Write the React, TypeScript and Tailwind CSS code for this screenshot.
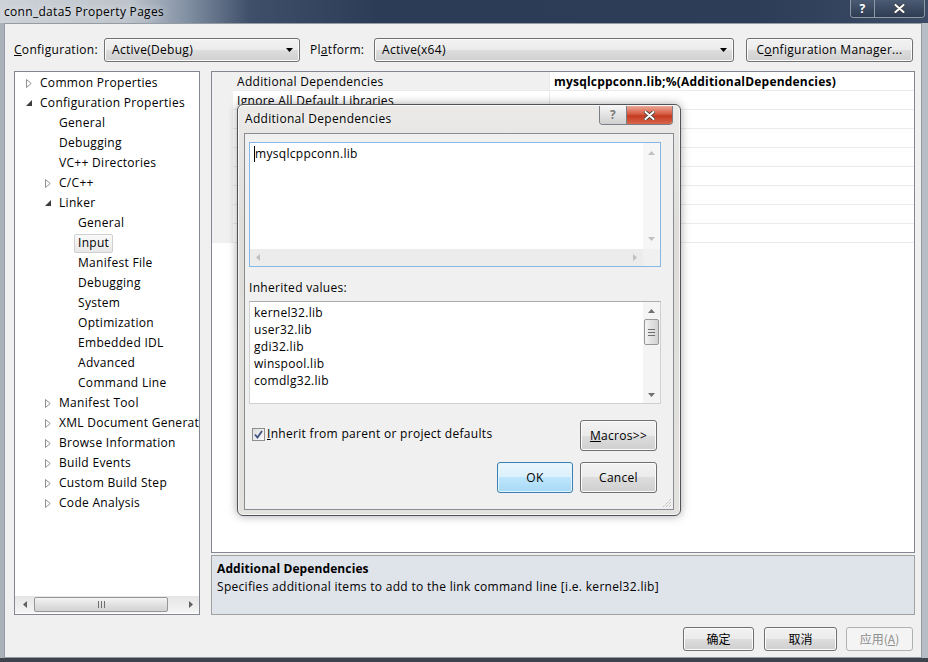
import React from "react"

type Node = { label: string; level: 0 | 1 | 2; arrow?: "open" | "closed"; selected?: boolean }

const tree: Node[] = [
  { label: "Common Properties", level: 0, arrow: "closed" },
  { label: "Configuration Properties", level: 0, arrow: "open" },
  { label: "General", level: 1 },
  { label: "Debugging", level: 1 },
  { label: "VC++ Directories", level: 1 },
  { label: "C/C++", level: 1, arrow: "closed" },
  { label: "Linker", level: 1, arrow: "open" },
  { label: "General", level: 2 },
  { label: "Input", level: 2, selected: true },
  { label: "Manifest File", level: 2 },
  { label: "Debugging", level: 2 },
  { label: "System", level: 2 },
  { label: "Optimization", level: 2 },
  { label: "Embedded IDL", level: 2 },
  { label: "Advanced", level: 2 },
  { label: "Command Line", level: 2 },
  { label: "Manifest Tool", level: 1, arrow: "closed" },
  { label: "XML Document Generator", level: 1, arrow: "closed" },
  { label: "Browse Information", level: 1, arrow: "closed" },
  { label: "Build Events", level: 1, arrow: "closed" },
  { label: "Custom Build Step", level: 1, arrow: "closed" },
  { label: "Code Analysis", level: 1, arrow: "closed" },
]

const levelPad = ["pl-[10px]", "pl-[29px]", "pl-[48px]"]

const props = [
  "Additional Dependencies",
  "Ignore All Default Libraries",
  "Ignore Specific Default Libraries",
  "Module Definition File",
  "Add Module to Assembly",
  "Embed Managed Resource File",
  "Force Symbol References",
  "Delay Loaded Dlls",
  "Assembly Link Resource",
]

const inherited = ["kernel32.lib", "user32.lib", "gdi32.lib", "winspool.lib", "comdlg32.lib"]

// win7 button face, no justify so combos can use their own
const face =
  "flex items-center rounded-[3px] border border-[#707070] bg-[linear-gradient(#f2f2f2,#ebebeb_50%,#dddddd_50%,#cfcfcf)] shadow-[inset_0_0_0_1px_#fbfbfb]"

function Collapsed() {
  return (
    <svg width="6" height="9" viewBox="0 0 6 9">
      <path d="M0.5 0.5 L5.2 4.5 L0.5 8.5 Z" fill="#fff" stroke="#8e8f8f" />
    </svg>
  )
}

function Expanded() {
  return (
    <svg width="6" height="6" viewBox="0 0 6 6">
      <path d="M6 0 L6 6 L0 6 Z" fill="#3c3c3c" />
    </svg>
  )
}

function Arrow({ dir, color = "#606060" }: { dir: "up" | "down" | "left" | "right"; color?: string }) {
  const d = {
    up: "M0 4 L3.5 0 L7 4 Z",
    down: "M0 0 L7 0 L3.5 4 Z",
    left: "M4 0 L4 7 L0 3.5 Z",
    right: "M0 0 L4 3.5 L0 7 Z",
  }[dir]
  const vert = dir === "up" || dir === "down"
  return (
    <svg width={vert ? 7 : 4} height={vert ? 4 : 7} viewBox={vert ? "0 0 7 4" : "0 0 4 7"}>
      <path d={d} fill={color} />
    </svg>
  )
}

function Combo({ text, className }: { text: string; className: string }) {
  return (
    <div className={`${face} h-[24px] justify-between pl-[7px] pr-[6px] ${className}`}>
      <span>{text}</span>
      <svg width="7" height="4" viewBox="0 0 7 4">
        <path d="M0 0 H7 L3.5 4 Z" fill="#000" />
      </svg>
    </div>
  )
}

function WhiteX() {
  return (
    <svg width="11" height="9" viewBox="0 0 11 9">
      <path d="M1.5 1 L9.5 8 M9.5 1 L1.5 8" stroke="#3a3a3a" strokeWidth="3.6" strokeLinecap="round" />
      <path d="M1.5 1 L9.5 8 M9.5 1 L1.5 8" stroke="#fff" strokeWidth="2" strokeLinecap="round" />
    </svg>
  )
}

export default function App() {
  return (
    <div className="relative flex h-[662px] w-[928px] flex-col overflow-hidden bg-[#b3b9c1] font-['Open_Sans','Noto_Sans_CJK_SC',sans-serif] text-[12px] tracking-[0.3px] text-black">
      {/* title bar */}
      <div className="relative flex h-[23px] shrink-0 items-center bg-[linear-gradient(90deg,#cdd2d8_0px,#bcc3cb_130px,#8492a5_185px,#3f4f69_250px,#2c3c57_380px,#2d3d58_760px,#3c4c67)] pl-[4px]">
        <span className="leading-[16px] [text-shadow:0_0_8px_#fff]">conn_data5 Property Pages</span>
        <div className="absolute right-[3px] top-0 flex h-[18px] overflow-hidden rounded-b-[4px] border border-t-0 border-[#8e98a6]">
          <div className="flex w-[24px] items-center justify-center border-r border-[#8e98a6] bg-[linear-gradient(#4b5b73,#2f3c52)] text-[12px] font-bold leading-none text-white">
            ?
          </div>
          <div className="flex w-[49px] items-center justify-center bg-[linear-gradient(#4b5b73,#2f3c52)]">
            <WhiteX />
          </div>
        </div>
      </div>

      <div className="flex flex-1">
        <div className="w-[4px] bg-[#aab0b8]" />
        {/* client */}
        <div className="flex flex-1 flex-col border border-[#959ba3] bg-[#f0f0f0] pl-[9px] pr-[6px] pt-[14px]">
          {/* top row */}
          <div className="flex h-[24px] items-center">
            <span className="w-[90px]">
              <span className="underline">C</span>onfiguration:
            </span>
            <Combo text="Active(Debug)" className="w-[196px]" />
            <span className="ml-[10px] w-[64px]">
              Pl<span className="underline">a</span>tform:
            </span>
            <Combo text="Active(x64)" className="w-[360px]" />
            <div className={`${face} ml-[12px] h-[24px] w-[167px] justify-center`}>
              <span>
                C<span className="underline">o</span>nfiguration Manager...
              </span>
            </div>
          </div>

          {/* panels */}
          <div className="mt-[9px] flex h-[544px] gap-[11px]">
            {/* tree */}
            <div className="flex w-[186px] flex-col border border-[#828790] bg-white">
              <div className="flex-1 overflow-hidden pt-[1px]">
                {tree.map((n, i) => (
                  <div key={i} className={`flex h-[20px] items-center whitespace-nowrap ${levelPad[n.level]}`}>
                    <span className="flex w-[15px] shrink-0 items-center pl-[1px]">
                      {n.arrow === "closed" && <Collapsed />}
                      {n.arrow === "open" && <Expanded />}
                    </span>
                    {n.selected ? (
                      <span className="-ml-[4px] flex h-[19px] items-center rounded-[2px] border border-[#d0d0d0] bg-[linear-gradient(#fafafa,#e8e8e8)] px-[3px]">
                        {n.label}
                      </span>
                    ) : (
                      <span>{n.label}</span>
                    )}
                  </div>
                ))}
              </div>
              {/* horizontal scrollbar */}
              <div className="mb-[1px] flex h-[17px] items-center bg-[linear-gradient(#e6e6e6,#f4f4f4)]">
                <span className="flex w-[17px] justify-center pl-[2px]">
                  <Arrow dir="left" />
                </span>
                <div className="ml-[2px] flex h-[15px] w-[134px] items-center justify-center rounded-[2px] border border-[#979797] bg-[linear-gradient(#f4f4f4,#e1e1e1_50%,#d2d2d2)]">
                  <svg width="7" height="7" viewBox="0 0 7 7">
                    <path d="M0.5 0 V7 M3.5 0 V7 M6.5 0 V7" stroke="#6e6e6e" />
                  </svg>
                </div>
                <span className="ml-auto flex w-[17px] justify-center">
                  <Arrow dir="right" />
                </span>
              </div>
            </div>

            {/* property grid + description */}
            <div className="flex flex-1 flex-col">
              <div className="h-[482px] border border-[#828790] bg-white">
                {props.map((p, i) => (
                  <div key={p} className="flex h-[19px]">
                    <div className="w-[21px] bg-[#f0f0f0]" />
                    <div
                      className={`flex w-[317px] items-center whitespace-nowrap border-b border-r border-[#ebebeb] pl-[4px] pt-[2px] ${
                        i === 0 ? "bg-[#f0f0f0]" : "bg-white"
                      }`}
                    >
                      {p}
                    </div>
                    <div className="flex flex-1 items-center border-b border-[#ebebeb] pl-[4px] pt-[2px] font-bold tracking-[0.2px]">
                      {i === 0 ? "mysqlcppconn.lib;%(AdditionalDependencies)" : ""}
                    </div>
                  </div>
                ))}
              </div>
              <div className="mt-[2px] h-[60px] border border-[#a0a0a0] bg-[#dfe3ea] pl-[5px] pt-[4px] leading-[18px]">
                <div className="font-bold tracking-[0.1px]">Additional Dependencies</div>
                <div>Specifies additional items to add to the link command line [i.e. kernel32.lib]</div>
              </div>
            </div>
          </div>

          {/* bottom buttons */}
          <div className="mr-[2px] mt-[12px] flex h-[24px] justify-end font-['Noto_Sans_CJK_SC',sans-serif] tracking-normal">
            <div className={`${face} w-[71px] justify-center`}>确定</div>
            <div className={`${face} ml-[10px] w-[73px] justify-center`}>取消</div>
            <div className="ml-[9px] flex w-[67px] items-center justify-center rounded-[3px] border border-[#adb2b5] bg-[#f4f4f4] text-[#8d8d8d]">
              应用(<span className="underline">A</span>)
            </div>
          </div>
        </div>
        <div className="w-[6px] bg-[#b7bdc5]" />
      </div>
      <div className="h-[4px] shrink-0 bg-[#3e444d]" />

      {/* Additional Dependencies dialog */}
      <div className="absolute left-[237px] top-[104px] flex h-[412px] w-[444px] flex-col rounded-[6px] border border-[#505357] bg-[linear-gradient(180deg,#ebeae8,#dfddda_30%,#e4e2df)] shadow-[0_0_10px_rgba(0,0,0,0.35),inset_0_0_0_1px_rgba(255,255,255,0.7)]">
        <div className="relative flex h-[28px] shrink-0 items-center pl-[7px]">
          <span className="[text-shadow:0_0_6px_#fff]">Additional Dependencies</span>
          <div className="absolute right-[7px] top-[1px] flex h-[19px] overflow-hidden rounded-b-[4px] border border-t-0 border-[#7b7f85]">
            <div className="flex w-[27px] items-center justify-center border-r border-[#7b7f85] bg-[linear-gradient(#f6f6f6,#e2e2e2_50%,#d0d0d0)] font-bold leading-none text-[#7a7a7a]">
              ?
            </div>
            <div className="flex w-[45px] items-center justify-center bg-[linear-gradient(#eba898,#d65a42_45%,#c43b22_55%,#d8664a)]">
              <WhiteX />
            </div>
          </div>
        </div>

        <div className="relative mx-[6px] mb-[5px] flex-1 border border-[#898d93] bg-[#f0f0f0] pl-[4px] pt-[8px]">
          {/* edit box */}
          <div className="flex h-[125px] w-[412px] flex-col border border-[#86b8e6] bg-white">
            <div className="flex flex-1">
              <div className="flex flex-1 items-start pl-[4px] pt-[3px] leading-[16px]">
                <span className="h-[16px] w-[1px] shrink-0 bg-black" />
                <span>mysqlcppconn.lib</span>
              </div>
              <div className="flex w-[17px] flex-col items-center justify-between bg-[#f6f6f6] py-[8px]">
                <Arrow dir="up" color="#c0c0c0" />
                <Arrow dir="down" color="#c0c0c0" />
              </div>
            </div>
            <div className="flex h-[17px]">
              <div className="flex flex-1 items-center justify-between bg-[#ececec] px-[6px]">
                <Arrow dir="left" color="#c0c0c0" />
                <Arrow dir="right" color="#c0c0c0" />
              </div>
              <div className="w-[17px] bg-[#f0f0f0]" />
            </div>
          </div>

          <div className="mt-[13px] leading-[15px]">Inherited values:</div>

          {/* inherited list */}
          <div className="mt-[6px] flex h-[103px] w-[412px] border border-[#d0d0d0] border-t-[#abadb3] bg-white">
            <div className="flex-1 pl-[4px] pt-[2px] leading-[17px]">
              {inherited.map((l) => (
                <div key={l}>{l}</div>
              ))}
            </div>
            <div className="flex w-[17px] flex-col items-center bg-[#f4f4f4] pt-[7px]">
              <Arrow dir="up" color="#707070" />
              <div className="mt-[6px] flex h-[26px] w-[15px] items-center justify-center rounded-[2px] border border-[#979797] bg-[linear-gradient(90deg,#f4f4f4,#e1e1e1_50%,#d2d2d2)]">
                <svg width="7" height="7" viewBox="0 0 7 7">
                  <path d="M0 0.5 H7 M0 3.5 H7 M0 6.5 H7" stroke="#6e6e6e" />
                </svg>
              </div>
              <div className="mb-[6px] mt-auto">
                <Arrow dir="down" color="#707070" />
              </div>
            </div>
          </div>

          {/* checkbox + macros */}
          <div className="mt-[16px] flex h-[31px] w-[408px] items-start justify-between">
            <div className="flex items-center pl-[3px] pt-[5px]">
              <div className="flex h-[13px] w-[13px] items-center justify-center border border-[#8f8f8f] bg-[linear-gradient(135deg,#dcdcdc,#fafafa)]">
                <svg width="9" height="9" viewBox="0 0 9 9">
                  <path d="M1 4.5 L3.5 7.5 L8 1" fill="none" stroke="#3e5183" strokeWidth="1.8" />
                </svg>
              </div>
              <span className="ml-[2px]">
                <span className="underline">I</span>nherit from parent or project defaults
              </span>
            </div>
            <div className={`${face} h-[31px] w-[77px] justify-center`}>
              <span>
                <span className="underline">M</span>acros&gt;&gt;
              </span>
            </div>
          </div>

          {/* OK / Cancel */}
          <div className="mt-[11px] flex w-[408px] justify-end gap-[7px]">
            <div className="flex h-[31px] w-[76px] items-center justify-center rounded-[3px] border border-[#3c7fb1] bg-[linear-gradient(#eaf6fd,#d9f0fc_50%,#bee6fd_50%,#a7d9f5)] shadow-[inset_0_0_0_1px_#e3f4fc]">
              OK
            </div>
            <div className={`${face} h-[31px] w-[77px] justify-center`}>Cancel</div>
          </div>

          {/* resize grip */}
          <svg className="absolute bottom-[1px] right-[1px]" width="11" height="11" viewBox="0 0 11 11">
            <path d="M10 2 L2 10 M10 5 L5 10 M10 8 L8 10" stroke="#a8a8a8" strokeDasharray="1 1" />
          </svg>
        </div>
      </div>
    </div>
  )
}
